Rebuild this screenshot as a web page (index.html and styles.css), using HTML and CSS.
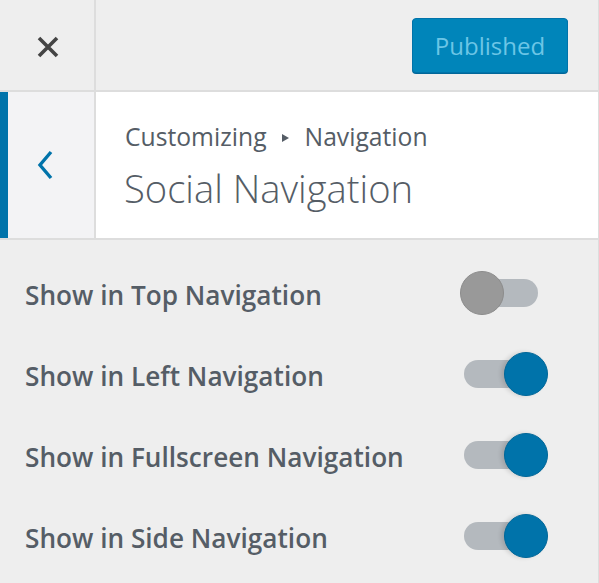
FILE: index.html
```html
<!DOCTYPE html>
<html>
<head>
<meta charset="utf-8">
<link rel="stylesheet" href="styles.css">
</head>
<body>
<div class="panel">
  <header class="topbar">
    <div class="close">
      <svg width="22" height="22" viewBox="0 0 22 22"><path d="M2 2 L20 20 M20 2 L2 20" stroke="#444" stroke-width="3.6" fill="none"/></svg>
    </div>
    <div class="spacer"></div>
    <button class="publish">Published</button>
  </header>
  <section class="section-head">
    <div class="back">
      <svg width="18" height="30" viewBox="0 0 18 30"><path d="M15 2 L4 15 L15 28" stroke="#0073aa" stroke-width="3.4" fill="none"/></svg>
    </div>
    <div class="titles">
      <div class="crumb">Customizing<span class="tri"></span>Navigation</div>
      <div class="title">Social Navigation</div>
    </div>
  </section>
  <div class="rows">
    <div class="row"><span class="label">Show in Top Navigation</span><span class="toggle"><span class="track"></span><span class="knob"></span></span></div>
    <div class="row"><span class="label">Show in Left Navigation</span><span class="toggle on"><span class="track"></span><span class="knob"></span></span></div>
    <div class="row"><span class="label">Show in Fullscreen Navigation</span><span class="toggle on"><span class="track"></span><span class="knob"></span></span></div>
    <div class="row"><span class="label">Show in Side Navigation</span><span class="toggle on"><span class="track"></span><span class="knob"></span></span></div>
  </div>
</div>
</body>
</html>
```
FILE: styles.css
```css
html, body { margin: 0; padding: 0; background: #eeeeee; }
body { font-family: "Open Sans", "Noto Sans", sans-serif; color: #555d66; }
.panel { width: 598px; height: 583px; border-right: 1px solid #dddddd; background: #eeeeee; }
.topbar { display: flex; align-items: center; height: 90px; border-bottom: 2px solid #dddddd; }
.close { width: 94px; height: 90px; border-right: 2px solid #dddddd; display: flex; align-items: center; justify-content: center; }
.close svg { margin-left: 2px; margin-top: 4px; }
.spacer { flex: 1; }
.publish { width: 156px; height: 55px; margin-right: 30px; margin-top: 1px; background: #0085ba; border: 1px solid #0073aa; border-radius: 4px; box-shadow: 0 1px 0 #006799; color: #6cc5e6; font-family: "Open Sans", sans-serif; font-size: 24px; padding: 0 0 1px 0; }
.section-head { display: flex; height: 146px; background: #ffffff; border-bottom: 2px solid #dddddd; }
.back { width: 86px; border-left: 8px solid #0073aa; border-right: 2px solid #dddddd; background: #f3f3f5; display: flex; align-items: center; justify-content: flex-start; }
.back svg { margin-left: 28px; margin-top: 0; }
.titles { padding: 29px 0 0 29px; }
.crumb { font-size: 24.7px; line-height: 32px; display: flex; align-items: center; white-space: pre; }
.tri { display: inline-block; width: 0; height: 0; border-top: 4.5px solid transparent; border-bottom: 4.5px solid transparent; border-left: 7px solid #555d66; margin: 2px 16px 0 15px; }
.title { font-size: 38.2px; font-weight: 300; line-height: 50px; margin-top: 10px; margin-left: -1px; }
.rows { padding-top: 12px; }
.row { height: 81px; display: flex; align-items: center; justify-content: space-between; padding: 0 50px 0 25px; }
.label { font-size: 26.2px; font-weight: 600; line-height: 36px; margin-top: 4px; }
.toggle { position: relative; width: 88px; height: 44px; }
.track { position: absolute; left: 4px; top: 8px; width: 74px; height: 28px; border-radius: 14px; background: #b4b9be; }
.knob { position: absolute; left: 0; top: 0; width: 42px; height: 42px; border-radius: 50%; background: #999999; border: 1px solid #8c8c8c; }
.toggle.on .knob { left: 44px; background: #0073aa; border-color: #006799; box-shadow: -3px 0 4px rgba(0,0,0,0.12); }
```
